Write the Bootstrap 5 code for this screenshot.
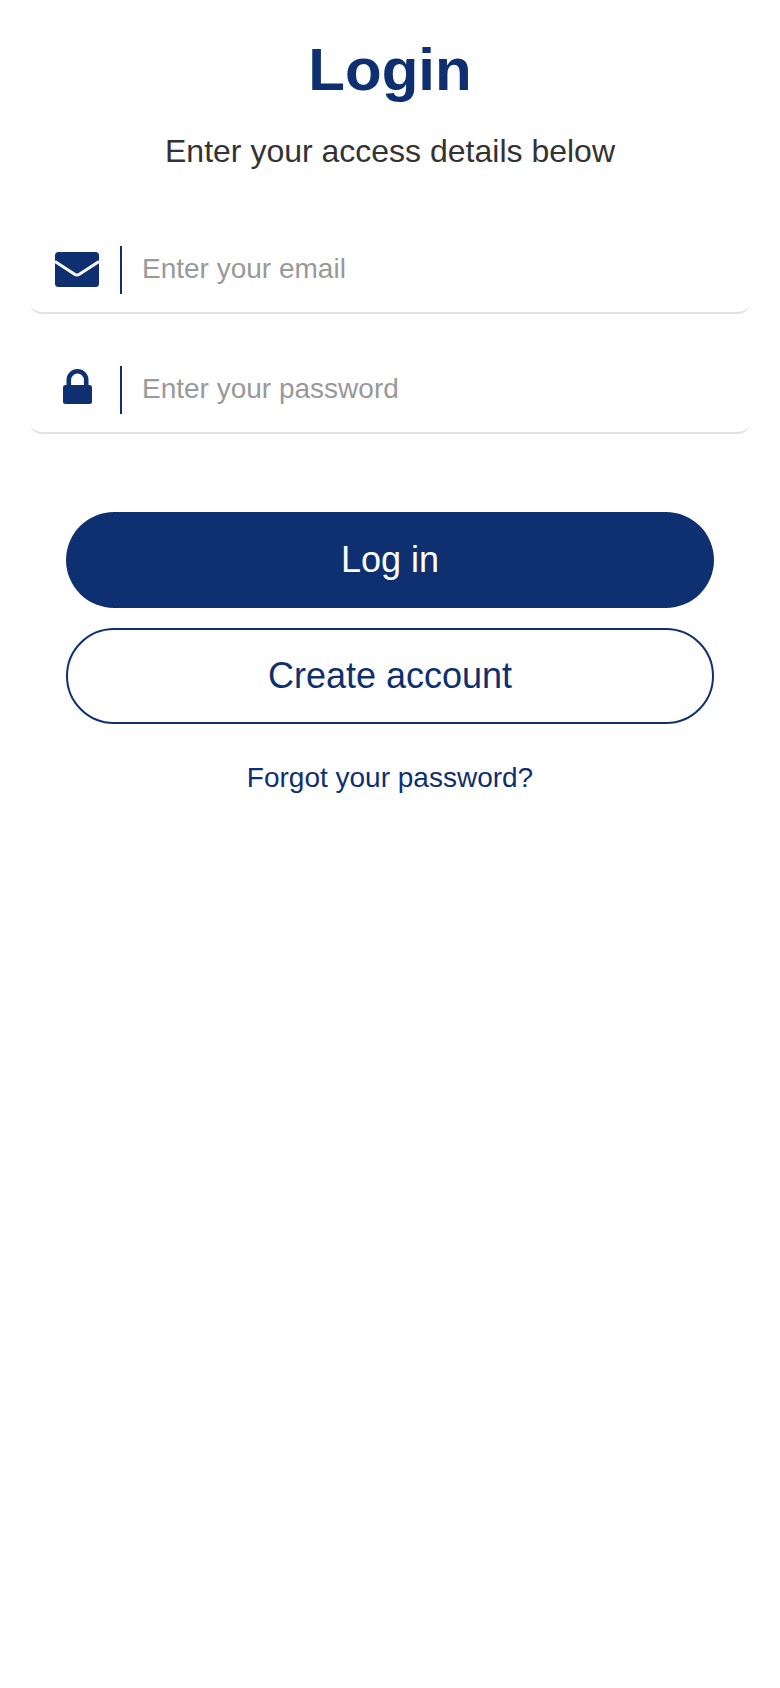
<!DOCTYPE html>
<html lang="en">
<head>
    <meta charset="UTF-8">
    <title>Login</title>
    <link href="https://cdn.jsdelivr.net/npm/bootstrap@5.3.0/dist/css/bootstrap.min.css" rel="stylesheet">
    <script src="https://cdn.jsdelivr.net/npm/bootstrap@5.3.0/dist/js/bootstrap.bundle.min.js"></script>
    <style>
        body {
            font-family: "Liberation Sans", Arial, sans-serif;
            background: #fff;
        }
        .login-wrap {
            padding: 30px 30px 0;
        }
        .login-title {
            color: #0e3070;
            font-size: 60px;
            font-weight: 700;
            line-height: 80px;
            margin: 0;
        }
        .login-sub {
            color: #333;
            font-size: 32px;
            line-height: 40px;
            margin: 21px 0 0;
        }
        .field-list {
            gap: 34px;
            margin-top: 57px;
        }
        .field-row {
            height: 86px;
            border-bottom: 2px solid #e2e2e2;
            border-radius: 0 0 12px 12px;
        }
        .field-icon {
            width: 90px;
            padding-left: 4px;
        }
        .icon-mail {
            margin-bottom: 1px;
        }
        .icon-lock {
            margin-bottom: 7px;
        }
        .field-sep {
            width: 2px;
            height: 48px;
            background: #0e3070;
        }
        .field-input {
            border: 0;
            outline: 0;
            font-size: 28px;
            padding: 0 0 2px 20px;
            flex: 1;
            min-width: 0;
        }
        .field-input::placeholder {
            color: #999;
            opacity: 1;
        }
        .btn-wrap {
            gap: 20px;
            margin-top: 78px;
            padding: 0 36px;
        }
        .btn-login, .btn-create {
            height: 96px;
            border-radius: 48px;
            font-size: 36px;
        }
        .btn-login, .btn-login:hover {
            background: #0e3070;
            border: 0;
            color: #fff;
        }
        .btn-create, .btn-create:hover {
            background: #fff;
            border: 2px solid #0e3070;
            color: #0e3070;
        }
        .forgot-row {
            margin-top: 33px;
        }
        .forgot-link {
            color: #0e3070;
            font-size: 28px;
            text-decoration: none;
        }
    </style>
</head>
<body>
    <div class="login-wrap">
        <h1 class="login-title text-center">Login</h1>
        <p class="login-sub text-center">Enter your access details below</p>

        <form class="field-list d-flex flex-column">
            <div class="field-row d-flex align-items-center">
                <span class="field-icon d-flex justify-content-center">
                    <svg class="icon-mail" width="44" height="35" viewBox="0 0 44 35"><rect width="44" height="35" rx="3.5" fill="#0e3070"/><path d="M0 9.5 L20 22.5 Q22 23.6 24 22.5 L44 9.5" fill="none" stroke="#fff" stroke-width="3"/></svg>
                </span>
                <span class="field-sep"></span>
                <input class="field-input" type="email" placeholder="Enter your email">
            </div>
            <div class="field-row d-flex align-items-center">
                <span class="field-icon d-flex justify-content-center">
                    <svg class="icon-lock" width="29" height="35" viewBox="0 0 29 35"><rect y="16" width="29" height="19" rx="2.5" fill="#0e3070"/><path d="M5.8 17 V11 a8.7 8.7 0 0 1 17.4 0 V17" fill="none" stroke="#0e3070" stroke-width="4.6"/></svg>
                </span>
                <span class="field-sep"></span>
                <input class="field-input" type="password" placeholder="Enter your password">
            </div>
        </form>

        <div class="btn-wrap d-flex flex-column">
            <button class="btn btn-login w-100" type="button">Log in</button>
            <button class="btn btn-create w-100" type="button">Create account</button>
        </div>
        <div class="forgot-row text-center">
            <a class="forgot-link" href="#">Forgot your password?</a>
        </div>
    </div>
</body>
</html>
